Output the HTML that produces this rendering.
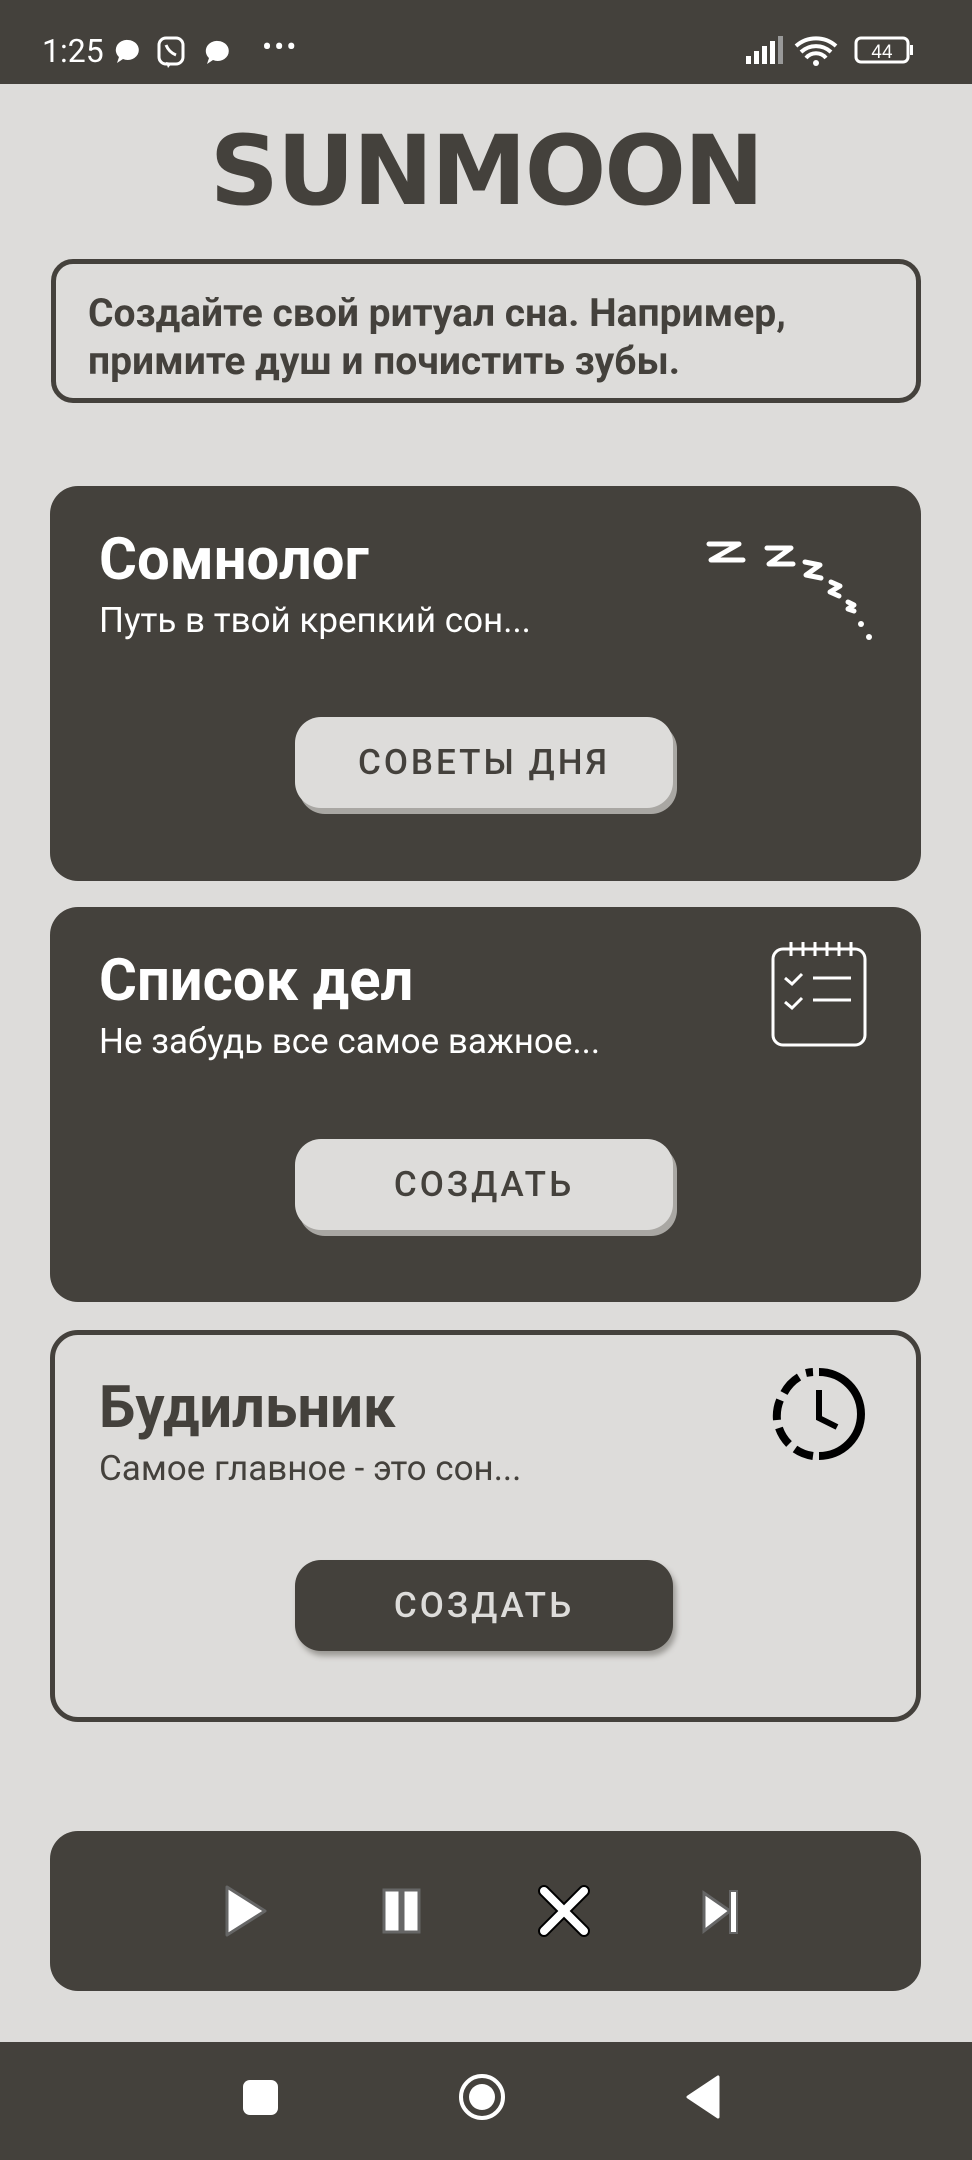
<!DOCTYPE html>
<html><head><meta charset="utf-8"><style>
*{margin:0;padding:0;box-sizing:border-box}
body{width:972px;height:2160px;background:#dddcda;font-family:"Roboto","Liberation Sans","DejaVu Sans",sans-serif;position:relative;overflow:hidden;color:#44413c}
.abs{position:absolute}
.status{left:0;top:0;width:972px;height:84px;background:#44413c;color:#fff}
.logo{left:0;width:972px;top:116px;text-align:center;font-size:96px;font-weight:900;letter-spacing:-2px;color:#44413c;line-height:110px;font-family:"DejaVu Sans","Liberation Sans",sans-serif}
.info{left:51px;top:259px;width:870px;height:144px;border:5px solid #44413c;border-radius:22px;padding:25px 0 0 32px;font-size:39px;font-weight:bold;line-height:48px}
.card{left:50px;width:871px;border-radius:28px;background:#44413c;color:#fff}
.card h2{position:absolute;left:49px;font-size:58px;font-weight:bold}
.card p{position:absolute;left:49px;font-size:35px}
.btn{position:absolute;left:245px;width:378px;height:91px;border-radius:26px;background:#dddcda;color:#44413c;font-size:35px;font-weight:500;letter-spacing:3px;text-align:center;line-height:91px;box-shadow:4px 6px 0 #a9a7a3}
.light{background:#dddcda;color:#44413c;border:5px solid #44413c}
.light .btn{background:#44413c;color:#dddcda;box-shadow:3px 5px 6px #9b9995;left:240px}
</style></head><body>
<div class="abs status">
 <div class="abs" style="left:42px;top:32px;font-size:32px">1:25</div>
 <svg class="abs" style="left:114px;top:36px" width="130" height="34" viewBox="0 0 130 34">
  <path d="M14 4a11 10 0 1 1-5 19l-6 4 2-6A11 10 0 0 1 14 4z" fill="#fff"/>
  <rect x="45" y="2" width="24" height="26" rx="7" fill="none" stroke="#fff" stroke-width="3"/><path d="M52 26l2 6 4-5" fill="#fff"/><path d="M52 9c2 5 5 8 10 10" stroke="#fff" stroke-width="3" fill="none"/>
  <path d="M104 5a11 10 0 1 1-5 19l-6 4 2-6A11 10 0 0 1 104 5z" fill="#fff"/>
 </svg>
 <div class="abs" style="left:262px;top:30px;font-size:30px;letter-spacing:2px">•••</div>
 <svg class="abs" style="left:744px;top:34px" width="176" height="34" viewBox="0 0 176 34">
  <rect x="2" y="22" width="5" height="8" fill="#fff"/><rect x="10" y="17" width="5" height="13" fill="#fff"/><rect x="18" y="12" width="5" height="18" fill="#fff"/><rect x="26" y="7" width="5" height="23" fill="#fff"/><rect x="34" y="2" width="5" height="28" fill="#999"/>
  <path d="M52 12a30 30 0 0 1 40 0M57 18a22 22 0 0 1 30 0M62 24a13 13 0 0 1 20 0" stroke="#fff" stroke-width="4" fill="none"/><circle cx="72" cy="29" r="3" fill="#fff"/>
  <rect x="112" y="4" width="52" height="24" rx="5" fill="none" stroke="#fff" stroke-width="3"/><rect x="166" y="11" width="3" height="10" fill="#fff"/>
  <text x="138" y="24" font-size="19" fill="#fff" text-anchor="middle" font-family="Liberation Sans">44</text>
 </svg>
</div>
<div class="abs logo">SUNMOON</div>
<div class="abs info">Создайте свой ритуал сна. Например,<br>примите душ и почистить зубы.</div>

<div class="abs card" style="top:486px;height:395px">
 <h2 style="top:40px">Сомнолог</h2>
 <p style="top:114px">Путь в твой крепкий сон...</p>
 <svg class="abs" style="left:655px;top:54px" width="175" height="106" viewBox="0 0 175 106">
  <g stroke="#fff" stroke-width="5" fill="none" stroke-linecap="round" stroke-linejoin="round">
   <path d="M4 4h30L6 20h32"/><path d="M62 8h24L64 24h24"/><path d="M100 22l15 3-14 10 15 3"/><path d="M126 42l9 4-10 6 9 4"/><path d="M143 62l6 3-6 4 6 2"/>
  </g>
  <circle cx="156" cy="84" r="3" fill="#fff"/><circle cx="164" cy="97" r="3" fill="#fff"/>
 </svg>
 <div class="btn" style="top:231px">СОВЕТЫ ДНЯ</div>
</div>

<div class="abs card" style="top:907px;height:395px">
 <h2 style="top:40px">Список дел</h2>
 <p style="top:114px">Не забудь все самое важное...</p>
 <svg class="abs" style="left:721px;top:29px" width="96" height="112" viewBox="0 0 96 112">
  <g stroke="#fff" stroke-width="3" fill="none">
   <rect x="2" y="13" width="92" height="96" rx="10"/>
   <path d="M20 6v14M32 6v14M44 6v14M56 6v14M68 6v14M80 6v14"/>
   <path d="M14 42l7 6 10-10M14 66l7 6 10-10M42 42h38M42 64h38"/>
  </g>
 </svg>
 <div class="btn" style="top:232px">СОЗДАТЬ</div>
</div>

<div class="abs card light" style="top:1330px;height:392px">
 <h2 style="top:39px;left:44px">Будильник</h2>
 <p style="top:113px;left:44px">Самое главное - это сон...</p>
 <svg class="abs" style="left:716px;top:31px" width="96" height="96" viewBox="0 0 96 96">
  <g stroke="#000" stroke-width="8" fill="none">
   <path d="M48 6a42 42 0 0 1 0 84" />
   <path d="M42 90a42 42 0 0 1-18-7M18 78a42 42 0 0 1-10-16M6 54a42 42 0 0 1 3-20M13 27a42 42 0 0 1 15-16M35 7a42 42 0 0 1 7-1"/>
   <path d="M48 24v28l18 9" stroke-width="6"/>
  </g>
 </svg>
 <div class="btn" style="top:225px">СОЗДАТЬ</div>
</div>

<div class="abs card" style="top:1831px;height:160px">
 <svg class="abs" style="left:170px;top:52px" width="560" height="56" viewBox="0 0 560 56">
  <path d="M7 4l38 24L7 52z" fill="#fff" stroke="#666" stroke-width="3" stroke-linejoin="round"/>
  <rect x="164" y="7" width="16" height="42" fill="#fff" stroke="#666" stroke-width="3"/><rect x="183" y="7" width="16" height="42" fill="#fff" stroke="#666" stroke-width="3"/>
  <path d="M324 8l40 40M364 8l-40 40" stroke="#000" stroke-width="12" stroke-linecap="round"/><path d="M324 8l40 40M364 8l-40 40" stroke="#fff" stroke-width="8" stroke-linecap="round"/>
  <path d="M484 10l26 18-26 20z" fill="#fff" stroke="#666" stroke-width="3"/><rect x="510" y="8" width="7" height="42" fill="#fff" stroke="#666" stroke-width="2"/>
 </svg>
</div>

<div class="abs" style="left:0;top:2042px;width:972px;height:118px;background:#44413c">
 <svg class="abs" style="left:0;top:0" width="972" height="118">
  <rect x="243" y="38" width="35" height="35" rx="7" fill="#fff"/>
  <circle cx="482" cy="55" r="21" fill="none" stroke="#fff" stroke-width="4"/><circle cx="482" cy="55" r="13" fill="#fff"/>
  <path d="M718 35v40l-30-20z" fill="#fff" stroke="#fff" stroke-width="3" stroke-linejoin="round"/>
 </svg>
</div>
</body></html>
